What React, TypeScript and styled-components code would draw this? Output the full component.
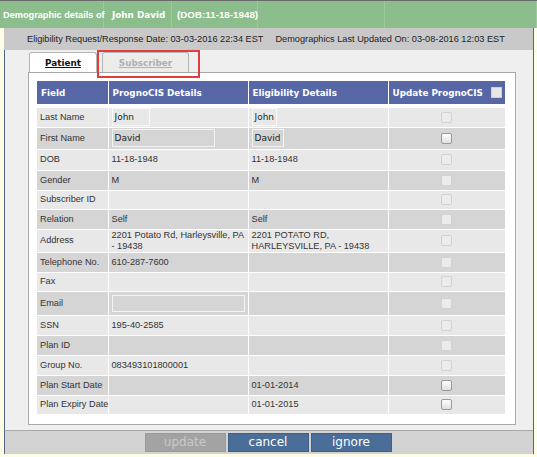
import React from 'react';
import styled, { createGlobalStyle } from 'styled-components';

interface Row {
  label: string;
  prog?: string;
  elig?: string;
  height: number;
  progInput?: number;
  eligInput?: boolean;
  enabled?: boolean;
}

const rows: Row[] = [
  { label: 'Last Name', prog: 'John', elig: 'John', height: 20, progInput: 38, eligInput: true },
  { label: 'First Name', prog: 'David', elig: 'David', height: 22, progInput: 103, eligInput: true, enabled: true },
  { label: 'DOB', prog: '11-18-1948', elig: '11-18-1948', height: 21 },
  { label: 'Gender', prog: 'M', elig: 'M', height: 20 },
  { label: 'Subscriber ID', height: 19 },
  { label: 'Relation', prog: 'Self', elig: 'Self', height: 20 },
  {
    label: 'Address',
    prog: '2201 Potato Rd, Harleysville, PA - 19438',
    elig: '2201 POTATO RD, HARLEYSVILLE, PA - 19438',
    height: 23,
  },
  { label: 'Telephone No.', prog: '610-287-7600', height: 20 },
  { label: 'Fax', height: 19 },
  { label: 'Email', height: 24, progInput: 133 },
  { label: 'SSN', prog: '195-40-2585', height: 20 },
  { label: 'Plan ID', height: 20 },
  { label: 'Group No.', prog: '083493101800001', height: 20 },
  { label: 'Plan Start Date', elig: '01-01-2014', height: 20, enabled: true },
  { label: 'Plan Expiry Date', elig: '01-01-2015', height: 19, enabled: true },
];

const App = () => {
  return (
    <>
      <GlobalStyle />
      <Page>
        <TitleBar>
          <TitleCell $w={104}>Demographic details of</TitleCell>
          <TitleCell $w={68} $big>
            John David
          </TitleCell>
          <TitleCell $w={86} $dob>
            (DOB:11-18-1948)
          </TitleCell>
          <TitleCell $w={127} />
          <TitleCell $w={152} />
        </TitleBar>
        <Frame>
          <InfoBar>
            <span>Eligibility Request/Response Date: 03-03-2016 22:34 EST</span>
            <span>Demographics Last Updated On: 03-08-2016 12:03 EST</span>
          </InfoBar>
          <Panel>
            <Tabs>
              <Tab $active>Patient</Tab>
              <TabWrap>
                <Tab>Subscriber</Tab>
                <Highlight />
              </TabWrap>
            </Tabs>
            <TabBody>
              <Grid>
                <colgroup>
                  <col style={{ width: 71 }} />
                  <col style={{ width: 140 }} />
                  <col style={{ width: 140 }} />
                  <col style={{ width: 117 }} />
                </colgroup>
                <thead>
                  <tr>
                    <Th>Field</Th>
                    <Th>PrognoCIS Details</Th>
                    <Th>Eligibility Details</Th>
                    <Th>
                      <HeadRight>
                        Update PrognoCIS <HeadBox />
                      </HeadRight>
                    </Th>
                  </tr>
                </thead>
                <tbody>
                  <Spacer>
                    <td colSpan={4} />
                  </Spacer>
                  {rows.map((r, i) => (
                    <Tr key={r.label} $alt={i % 2 === 1} style={{ height: r.height }}>
                      <Td>{r.label}</Td>
                      <Td>
                        {r.progInput ? (
                          <FakeInput style={{ width: r.progInput }}>{r.prog}</FakeInput>
                        ) : (
                          r.prog
                        )}
                      </Td>
                      <Td>{r.eligInput ? <FakeInput>{r.elig}</FakeInput> : r.elig}</Td>
                      <CheckCell>
                        <Check $enabled={r.enabled} />
                      </CheckCell>
                    </Tr>
                  ))}
                </tbody>
              </Grid>
            </TabBody>
          </Panel>
          <ButtonBar>
            <Button $disabled>update</Button>
            <Button>cancel</Button>
            <Button>ignore</Button>
          </ButtonBar>
        </Frame>
      </Page>
    </>
  );
};

export default App;

const GlobalStyle = createGlobalStyle`
  body {
    margin: 0;
    background: #fefde6;
    font-family: "Liberation Sans", Arial, sans-serif;
  }
`;

const Page = styled.div`
  width: 537px;
  height: 457px;
  overflow: hidden;
`;

const TitleBar = styled.div`
  display: flex;
  height: 27px;
  background: #8cbd8c;
  border-top: 1px solid #6a6a6a;
`;

const TitleCell = styled.div<{ $w: number; $big?: boolean; $dob?: boolean }>`
  width: ${(p) => p.$w}px;
  flex-shrink: 0;
  box-sizing: border-box;
  border-right: 1px solid #9ec89e;
  display: flex;
  align-items: center;
  padding-left: ${(p) => (p.$dob ? 5 : p.$big ? 8 : 3)}px;
  color: #fff;
  font-weight: bold;
  font-family: ${(p) => (p.$big ? '"DejaVu Sans", sans-serif' : '"Liberation Sans", Arial, sans-serif')};
  font-size: ${(p) => (p.$dob ? 9.8 : p.$big ? 8.8 : 9.2)}px;
  white-space: nowrap;
`;

const Frame = styled.div`
  margin-left: 4px;
  width: 529px;
  border-right: 1px solid #56657f;
`;

const InfoBar = styled.div`
  height: 22px;
  background: #c9c9c9;
  display: flex;
  align-items: center;
  gap: 12px;
  padding-left: 23px;
  font-size: 9.2px;
  color: #222;
  white-space: nowrap;
`;

const Panel = styled.div`
  background: #efefef;
  border-left: 1px solid #56657f;
  padding: 2px 17px 5px 23px;
`;

const Tabs = styled.div`
  display: flex;
  gap: 5px;
  padding-left: 1px;
  height: 20px;
`;

const TabWrap = styled.div`
  position: relative;
`;

const Tab = styled.div<{ $active?: boolean }>`
  box-sizing: border-box;
  height: 20px;
  width: ${(p) => (p.$active ? 68 : 87)}px;
  border: 1px solid #b5b5b5;
  border-bottom: none;
  border-radius: 3px 3px 0 0;
  background: ${(p) => (p.$active ? '#fff' : '#ececec')};
  color: ${(p) => (p.$active ? '#111' : '#b0b0b0')};
  font-family: "DejaVu Sans", sans-serif;
  font-weight: bold;
  font-size: 8.8px;
  text-decoration: underline;
  display: flex;
  align-items: center;
  justify-content: center;
  position: relative;
  margin-bottom: -1px;
  z-index: 1;
`;

const Highlight = styled.div`
  position: absolute;
  left: -5px;
  top: -2px;
  width: 103px;
  height: 28px;
  box-sizing: border-box;
  border: 2px solid #e23c3c;
  z-index: 2;
`;

const TabBody = styled.div`
  background: #fff;
  border: 1px solid #a9a9a9;
  padding: 8px 9px 9px 8px;
`;

const Grid = styled.table`
  width: 468px;
  table-layout: fixed;
  border-collapse: collapse;
  font-size: 9.2px;
  color: #333;
`;

const Th = styled.th`
  height: 23px;
  background: #5767a6;
  color: #fff;
  text-align: left;
  padding: 0 4px;
  font-family: "DejaVu Sans", sans-serif;
  font-size: 8.8px;
  font-weight: bold;
  border-right: 1px solid #fff;
  white-space: nowrap;
  &:last-child {
    border-right: none;
  }
`;

const HeadRight = styled.div`
  display: flex;
  align-items: center;
  justify-content: space-between;
`;

const HeadBox = styled.span`
  width: 9px;
  height: 9px;
  background: #e6e6e6;
  border: 1px solid #d0d0d0;
  margin-right: -1px;
`;

const Spacer = styled.tr`
  height: 3px;
  td {
    padding: 0;
  }
`;

const Tr = styled.tr<{ $alt: boolean }>`
  background: ${(p) => (p.$alt ? '#d5d5d5' : '#e8e8e8')};
`;

const Td = styled.td`
  border: 1px solid #fff;
  border-left: none;
  padding: 0 1px 0 3px;
  line-height: 11px;
  vertical-align: middle;
  &:first-child {
    border-left: none;
    padding-left: 3px;
    white-space: nowrap;
  }
`;

const CheckCell = styled.td`
  border-top: 1px solid #fff;
  border-bottom: 1px solid #fff;
  text-align: center;
  vertical-align: middle;
  padding: 0;
`;

const Check = styled.span<{ $enabled?: boolean }>`
  display: inline-block;
  vertical-align: middle;
  width: 9px;
  height: 9px;
  border-radius: 2px;
  border: 1px solid ${(p) => (p.$enabled ? '#9a9a9a' : '#d2d2d2')};
  background: ${(p) => (p.$enabled ? 'linear-gradient(#fdfdfd, #e0e0e0)' : '#ececec')};
`;

const FakeInput = styled.span`
  display: inline-block;
  vertical-align: middle;
  box-sizing: border-box;
  min-height: 17px;
  padding: 2px 2px;
  border: 1px solid rgba(255, 255, 255, 0.7);
  font-family: "DejaVu Sans", sans-serif;
  font-size: 9px;
  line-height: 12px;
  color: #222;
`;

const ButtonBar = styled.div`
  height: 21px;
  background: #d3d3d3;
  border-left: 1px solid #56657f;
  border-top: 1px solid #a8a8a8;
  display: flex;
  justify-content: center;
  align-items: flex-start;
  gap: 2px;
  padding-top: 2px;
  padding-right: 2px;
`;

const Button = styled.div<{ $disabled?: boolean }>`
  width: 81px;
  height: 19px;
  box-sizing: border-box;
  display: flex;
  align-items: center;
  justify-content: center;
  font-family: "DejaVu Sans", sans-serif;
  font-size: 12px;
  color: ${(p) => (p.$disabled ? '#c9c9c9' : '#fff')};
  background: ${(p) => (p.$disabled ? '#a3a3a3' : '#4b6e98')};
  border: 1px solid ${(p) => (p.$disabled ? '#9a9a9a' : '#3e5f88')};
`;
